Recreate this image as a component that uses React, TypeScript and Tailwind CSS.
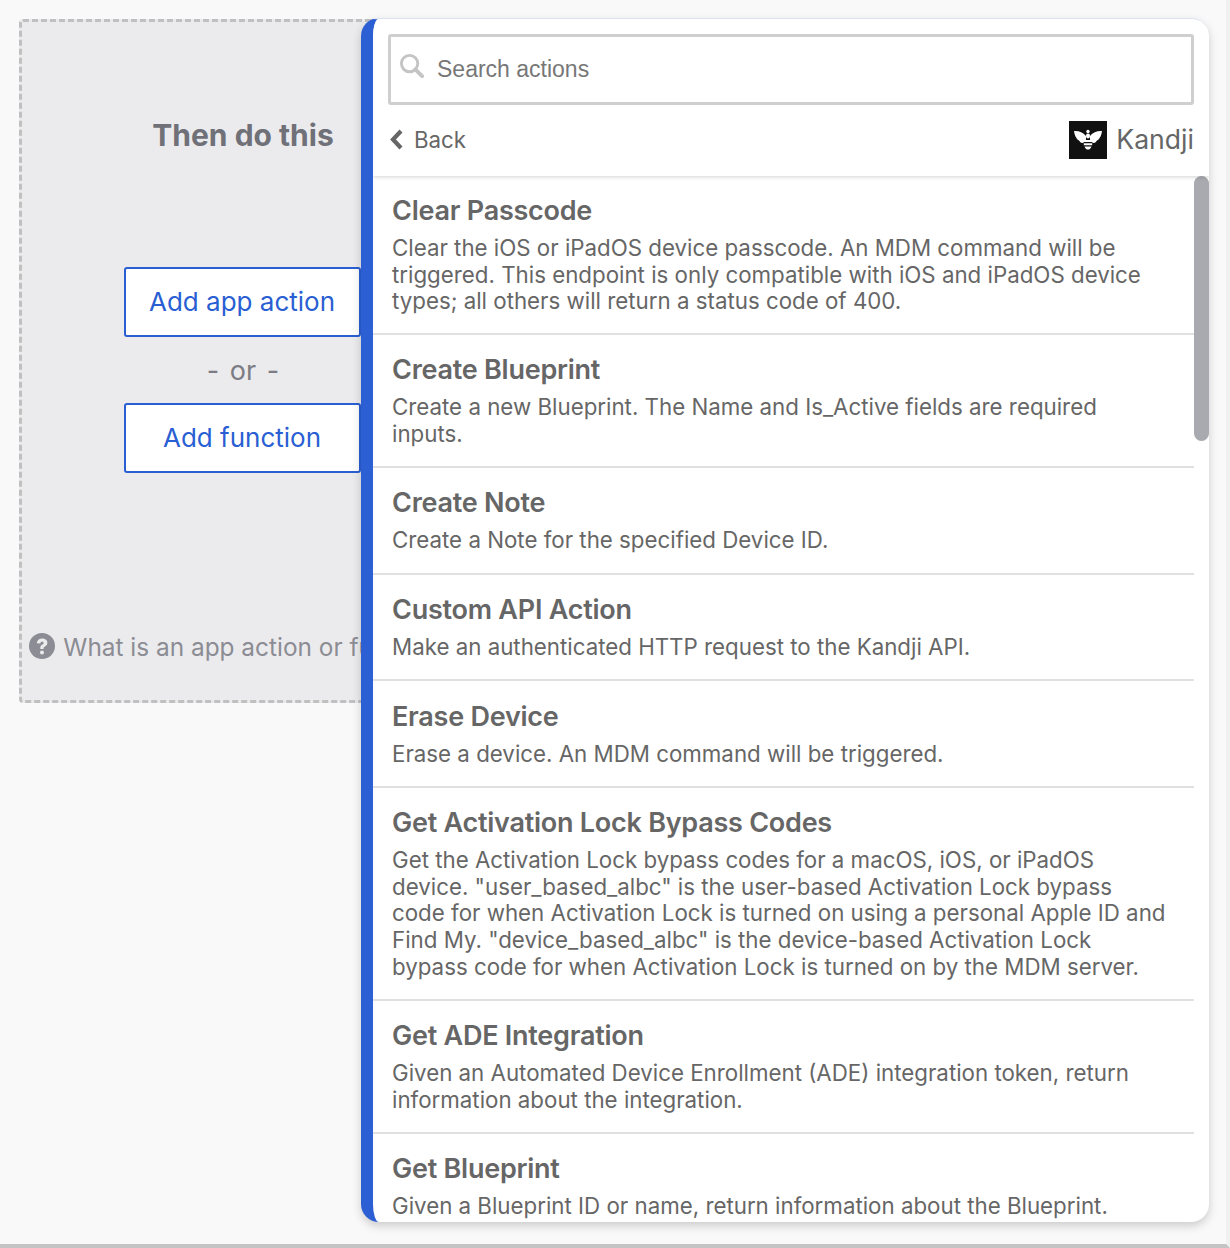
import React from "react";

const actions = [
  {
    title: "Clear Passcode",
    text: "Clear the iOS or iPadOS device passcode. An MDM command will be triggered. This endpoint is only compatible with iOS and iPadOS device types; all others will return a status code of 400.",
    first: true,
  },
  {
    title: "Create Blueprint",
    text: "Create a new Blueprint. The Name and Is_Active fields are required inputs.",
  },
  { title: "Create Note", text: "Create a Note for the specified Device ID." },
  { title: "Custom API Action", text: "Make an authenticated HTTP request to the Kandji API." },
  { title: "Erase Device", text: "Erase a device. An MDM command will be triggered." },
  {
    title: "Get Activation Lock Bypass Codes",
    text: 'Get the Activation Lock bypass codes for a macOS, iOS, or iPadOS device. "user_based_albc" is the user-based Activation Lock bypass code for when Activation Lock is turned on using a personal Apple ID and Find My. "device_based_albc" is the device-based Activation Lock bypass code for when Activation Lock is turned on by the MDM server.',
  },
  {
    title: "Get ADE Integration",
    text: "Given an Automated Device Enrollment (ADE) integration token, return information about the integration.",
  },
  { title: "Get Blueprint", text: "Given a Blueprint ID or name, return information about the Blueprint." },
];

const BeeLogo = () => (
  <svg viewBox="0 0 38 38" className="w-[38px] h-[38px] shrink-0">
    <rect width="38" height="38" fill="#111" />
    <path d="M5 10 C9 9.500 14 11 17 15 L17 18.500 C15.500 22 12.500 23.500 10.500 20 C7 18 5.500 14 5 10Z" fill="#fff" />
    <path d="M33 10 C29 9.500 24 11 21 15 L21 18.500 C22.500 22 25.500 23.500 27.500 20 C31 18 32.500 14 33 10Z" fill="#fff" />
    <circle cx="19" cy="10.500" r="1.700" fill="#fff" />
    <ellipse cx="19" cy="15" rx="2.100" ry="2.400" fill="#fff" />
    <path d="M14.800 19h8.400v2h-8.400zM14.800 22.200h8.400v2h-8.400zM15.500 25.400h7c-.7 2-1.900 3.200-3.500 3.200s-2.800-1.200-3.500-3.200z" fill="#fff" />
  </svg>
);

const ActionRow = ({ title, text, first }: { title: string; text: string; first?: boolean }) => (
  <div className={`pl-[19px] pr-[24px] border-b-2 border-[#e0e0e0] ${first ? "pt-[18px] pb-[18px]" : "pt-[18.5px] pb-[18.5px]"}`}>
    <div className="text-[27px] leading-[33px] font-semibold text-[#666] tracking-[-0.25px]">{title}</div>
    <div className="text-[22.3px] leading-[26.6px] mt-[8px] text-[#666]">{text}</div>
  </div>
);

export default function App() {
  return (
    <div
      className="relative w-[1230px] h-[1248px] overflow-hidden bg-[#f9f9f9] pl-[19px] pt-[19px] border-b-4 border-b-[#c4c4c4] border-r-4 border-r-[#f1f1f1]"
      style={{ fontFamily: "Inter, sans-serif" }}
    >
      <div className="w-[448px] h-[684px] rounded-[4px] border-[3px] border-dashed border-[#c0c0c0] bg-[#ebebed] flex flex-col items-center pt-[93px]">
        <h2 className="text-[30px] leading-[40px] font-bold text-[#6f7078]">Then do this</h2>
        <button className="mt-[112px] mr-[2px] pb-[2px] w-[237px] h-[70px] rounded-[3px] border-2 border-[#2a5fd3] bg-white text-[26px] text-[#2a5fd3]">
          Add app action
        </button>
        <div className="mt-[17px] h-[34px] text-[27px] leading-[34px] text-[#7b7c84] [word-spacing:3px]">- or -</div>
        <button className="mt-[15px] mr-[2px] pb-[2px] w-[237px] h-[70px] rounded-[3px] border-2 border-[#2a5fd3] bg-white text-[26px] text-[#2a5fd3]">
          Add function
        </button>
        <div className="mt-[157px] flex items-center gap-[8px] text-[24.4px] leading-[34px] text-[#8b8c94] whitespace-nowrap">
          <svg viewBox="0 0 26 26" className="w-[26px] h-[26px] shrink-0 -mt-[2px]">
            <circle cx="13" cy="13" r="13" fill="#8b8c94" />
            <path d="M7.800 10.200c.2-3 2.300-4.700 5.400-4.700 3 0 5.200 1.700 5.200 4.300 0 1.900-1 2.900-2.400 3.700-1 .6-1.400 1-1.400 1.900v.5h-3.300v-.9c0-1.700.7-2.600 2-3.400.9-.6 1.400-1 1.400-1.600 0-.8-.7-1.300-1.600-1.300-1 0-1.700.6-1.800 1.700z" fill="#ebebed" />
            <circle cx="13" cy="19.600" r="2" fill="#ebebed" />
          </svg>
          What is an app action or function?
        </div>
      </div>

      <div className="absolute left-[361px] top-[18px] w-[848px] h-[1204px] rounded-[18px] overflow-hidden border-l-[12px] border-l-[#2b5fd3] bg-white border-t border-t-[#dbe3f3] shadow-[0_4px_10px_rgba(0,0,0,0.18)] flex flex-col">
        <div className="shrink-0 h-[157px] px-[15px] pt-[15px] shadow-[0_1px_4px_rgba(0,0,0,0.18)] z-10 bg-white">
          <div className="h-[71px] rounded-[3px] border-[3px] border-[#cfcfcf] flex items-center pl-[8px] gap-[13px]">
            <svg viewBox="0 0 26 26" className="w-[25px] h-[25px] shrink-0 -mt-[9px]" fill="none" stroke="#c4c4c4">
              <circle cx="11" cy="11" r="8.500" strokeWidth="3" />
              <path d="M17 17l7 7" strokeWidth="4" strokeLinecap="round" />
            </svg>
            <span className="text-[23px] -mt-[1px] text-[#777]" style={{ fontFamily: '"Liberation Sans", sans-serif' }}>
              Search actions
            </span>
          </div>
          <div className="mt-[15px] flex items-center justify-between">
            <div className="flex items-center gap-[11px] text-[22.3px] text-[#666]">
              <svg viewBox="0 0 14 21" className="w-[14px] h-[21px] ml-[1px]" fill="none" stroke="#666" strokeWidth="4.200">
                <path d="M12 2 L4 10.500 L12 19" />
              </svg>
              Back
            </div>
            <div className="flex items-center gap-[9px] text-[26.6px] text-[#666]">
              <BeeLogo />
              Kandji
            </div>
          </div>
        </div>
        <div className="relative flex-1 overflow-hidden pr-[15px]">
          {actions.map((a) => (
            <ActionRow key={a.title} {...a} />
          ))}
          <div className="absolute right-0 top-0 w-[15px] h-[265px] rounded-[8px] bg-[#a9aab0]" />
        </div>
      </div>
    </div>
  );
}
